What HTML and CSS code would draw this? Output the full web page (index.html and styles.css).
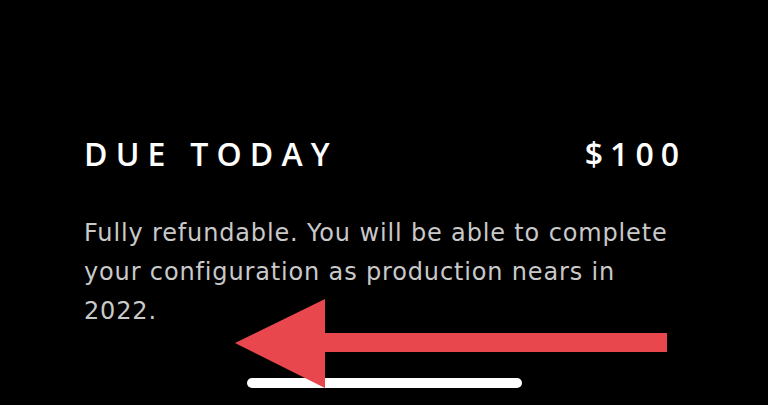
FILE: index.html
```html
<!DOCTYPE html>
<html lang="en">
<head>
<meta charset="utf-8">
<title>Due today</title>
<link rel="stylesheet" href="styles.css">
</head>
<body>
<main class="screen">
  <section class="summary">
    <div class="due-row">
      <h2 class="due-label">DUE TODAY</h2>
      <span class="due-amount">$100</span>
    </div>
    <p class="note">Fully refundable. You will be able to complete your configuration as production nears in 2022.</p>
  </section>
  <div class="home-indicator"></div>
  <svg class="arrow" width="768" height="405" viewBox="0 0 768 405" aria-hidden="true">
    <polygon points="235,343 325,299 325,333 667,333 667,352 325,352 325,388" fill="#e9474e"/>
  </svg>
</main>
</body>
</html>
```
FILE: styles.css
```css
* { box-sizing: border-box; }
html, body {
  margin: 0;
  padding: 0;
  background: #000;
}
.screen {
  position: relative;
  width: 768px;
  height: 405px;
  overflow: hidden;
  background: #000;
  font-family: "Open Sans", "Liberation Sans", sans-serif;
}
.summary {
  padding: 134px 80px 0 84px;
}
.due-row {
  display: flex;
  justify-content: space-between;
  align-items: baseline;
  padding-right: 2px;
  color: #fff;
}
.due-label {
  margin: 0;
  font-size: 32px;
  font-weight: 600;
  letter-spacing: 8.2px;
  line-height: 40px;
}
.due-amount {
  font-size: 32px;
  font-weight: 600;
  letter-spacing: 7px;
  line-height: 40px;
}
.note {
  margin: 40px 0 0;
  color: #c9c9c9;
  font-family: "DejaVu Sans", "Open Sans", sans-serif;
  font-size: 24px;
  line-height: 39px;
  letter-spacing: 0.85px;
}
.home-indicator {
  position: absolute;
  left: 247px;
  top: 378px;
  width: 275px;
  height: 10px;
  border-radius: 5px;
  background: #fff;
}
.arrow {
  position: absolute;
  left: 0;
  top: 0;
}
```
